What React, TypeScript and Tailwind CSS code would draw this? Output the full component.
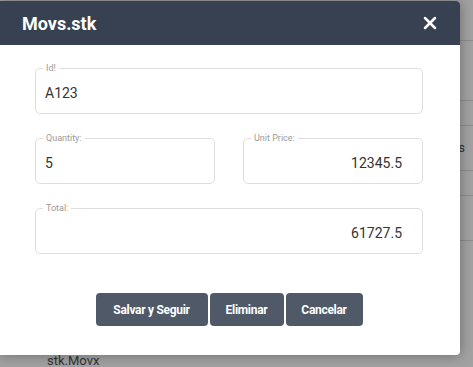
import React from 'react';
import { X } from 'lucide-react';

const font = { fontFamily: 'Roboto, "Liberation Sans", sans-serif' };

interface FieldProps {
  label: string;
  value: string;
  align?: 'left' | 'right';
}

const Field: React.FC<FieldProps> = ({ label, value, align = 'left' }) => (
  <fieldset className="m-0 h-[50px] rounded-[5px] border border-[#dedede] px-[9px] pb-0 pt-0">
    <legend className="ml-[-2px] px-[3px] text-[9px] leading-[9px] text-[#9a9a9a]">{label}</legend>
    <div
      className={`mt-[11px] text-[14px] leading-[18px] text-[#333] ${
        align === 'right' ? 'pr-[11px] text-right' : ''
      }`}
    >
      {value}
    </div>
  </fieldset>
);

export default function App() {
  return (
    <div className="relative h-[367px] w-[473px] overflow-hidden bg-[#a2a2a2]" style={font}>
      {/* page behind the dialog */}
      <div className="flex flex-col text-[13px] text-[#333]">
        <div className="h-[41px] border-b border-[#8c8c8c]" />
        <div className="h-[60px] border-b border-[#8c8c8c]" />
        <div className="h-[25px] border-b border-[#8c8c8c]" />
        <div className="flex h-[45px] items-center justify-end border-b border-[#8c8c8c] pr-[8px]">s</div>
        <div className="h-[25px] border-b border-[#8c8c8c]" />
        <div className="h-[45px] border-b border-[#8c8c8c]" />
        <div className="h-[113px]" />
        <div className="pl-[47px] leading-[14px]">stk.Movx</div>
      </div>

      {/* dialog */}
      <div className="absolute left-0 top-[1px] flex h-[354px] w-[460px] flex-col overflow-hidden rounded-r-[4px] bg-white shadow-[0_0_14px_rgba(0,0,0,0.35)]">
        <div className="flex h-[44px] items-center justify-between bg-[#374151] pl-[22px] pr-[20px]">
          <span className="text-[18px] font-bold text-white">Movs.stk</span>
          <X className="h-[20px] w-[20px] text-white" strokeWidth={3} />
        </div>
        <div className="flex flex-col gap-[20px] pl-[35px] pr-[37px] pt-[19px]">
          <Field label="Id!" value="A123" />
          <div className="grid grid-cols-2 gap-[28px]">
            <Field label="Quantity:" value="5" />
            <Field label="Unit Price:" value="12345.5" align="right" />
          </div>
          <Field label="Total:" value="61727.5" align="right" />
        </div>
        <div className="mt-[39px] flex justify-center gap-[2px] pr-[2px]">
          <button className="h-[33px] w-[112px] rounded-[4px] bg-[#4f5968] text-[12px] font-bold tracking-[-0.3px] text-white">
            Salvar y Seguir
          </button>
          <button className="h-[33px] w-[74px] rounded-[4px] bg-[#4f5968] text-[12px] font-bold tracking-[-0.3px] text-white">
            Eliminar
          </button>
          <button className="h-[33px] w-[77px] rounded-[4px] bg-[#4f5968] text-[12px] font-bold tracking-[-0.3px] text-white">
            Cancelar
          </button>
        </div>
      </div>
    </div>
  );
}
